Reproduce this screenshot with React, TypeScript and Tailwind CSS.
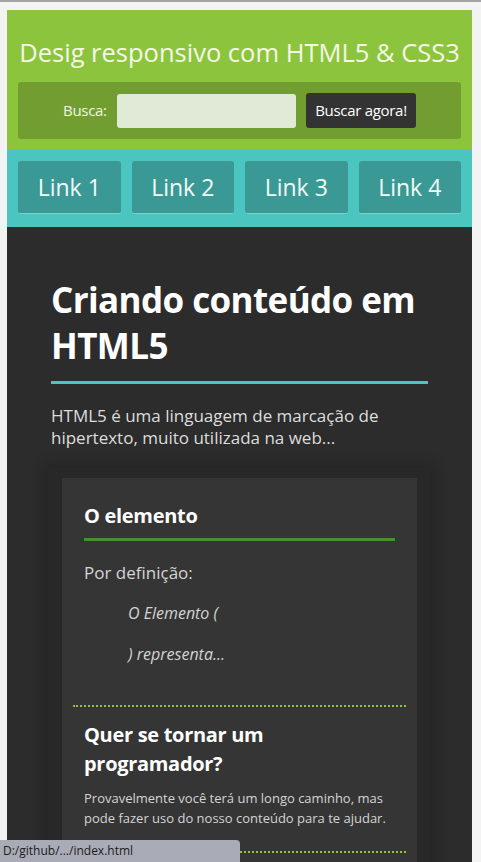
export default function App() {
  const font = { fontFamily: '"Open Sans", "Noto Sans", sans-serif' };
  return (
    <div className="relative h-[862px] w-[481px] overflow-hidden bg-[#f3f3f3]" style={font}>
      <div className="h-[2px] bg-[#a3a3a3]" />
      <div className="ml-[7px] mt-[8px] w-[465px]">
        <header className="bg-[#8cc43e] px-[11px] pb-[11px] pt-[24px]">
          <h1 className="text-center text-[25.5px] leading-[36px] text-[#f4f8e6]">Desig responsivo com HTML5 &amp; CSS3</h1>
          <div className="mt-[12px] flex h-[57px] items-center rounded-[3px] bg-[#729e31] pl-[45px]">
            <span className="w-[44px] text-[15px] tracking-[-0.3px] text-[#f0f5e0]">Busca:</span>
            <div className="ml-[10px] h-[34px] w-[179px] rounded-[3px] bg-[#e1ead6]" />
            <button className="ml-[10px] h-[35px] w-[110px] rounded-[3px] bg-[#333333] text-[15px] tracking-[-0.3px] text-white">Buscar agora!</button>
          </div>
        </header>
        <nav className="flex gap-[11px] bg-[#4bc5bf] px-[11px] pb-[13px] pt-[11px]">
          {["Link 1", "Link 2", "Link 3", "Link 4"].map((l) => (
            <a key={l} className="flex h-[53px] flex-1 items-center justify-center rounded-[3px] border-b border-[#7ad3cf] bg-[#3b9995] text-[23px] text-[#f2fbfa]">
              {l}
            </a>
          ))}
        </nav>
        <main className="h-[700px] bg-[#2c2c2c] px-[44px] pt-[50px]">
          <h2 className="text-[35px] font-bold leading-[46px] tracking-[-0.6px] text-white">Criando conteúdo em HTML5</h2>
          <div className="mt-[12px] h-[3px] bg-[#4bc5bf]" />
          <p className="mt-[21px] text-[17px] leading-[22px] text-[#dddddd]">HTML5 é uma linguagem de marcação de hipertexto, muito utilizada na web...</p>
          <div className="mx-[-3px] mt-[19px] bg-[#282828] px-[14px] pt-[10px] shadow-[0_0_12px_4px_rgba(0,0,0,0.18)]">
            <div className="bg-[#353535] px-[11px] pt-[24px]">
              <div className="px-[11px]">
                <h3 className="text-[20px] font-bold leading-[28px] tracking-[-0.3px] text-white">O elemento</h3>
                <div className="mt-[8px] h-[3px] bg-[#4a8f2f]" />
                <p className="mt-[20px] text-[17px] leading-[24px] text-[#d4d4d4]">Por definição:</p>
                <p className="ml-[44px] mt-[16px] text-[16px] italic leading-[24px] text-[#d4d4d4]">O Elemento (</p>
                <p className="ml-[44px] mt-[17px] text-[16px] italic leading-[24px] text-[#d4d4d4]">) representa...</p>
              </div>
              <div className="mt-[39px] border-t-2 border-dotted border-[#8cc43e]" />
              <div className="px-[11px] pt-[13px]">
                <h3 className="text-[20px] font-bold leading-[29px] tracking-[-0.3px] text-white">Quer se tornar um programador?</h3>
                <p className="mt-[10px] text-[13px] leading-[20px] text-[#d4d4d4]">Provavelmente você terá um longo caminho, mas pode fazer uso do nosso conteúdo para te ajudar.</p>
              </div>
              <div className="mt-[23px] border-t-2 border-dotted border-[#8cc43e]" />
              <div className="h-[60px]" />
            </div>
          </div>
        </main>
      </div>
      <div className="absolute bottom-0 left-0 flex h-[22px] w-[240px] items-center rounded-tr-[4px] bg-[#a9acb7] pl-[3px] text-[12px] text-[#1c1c1c]">
        D:/github/.../index.html
      </div>
    </div>
  );
}
